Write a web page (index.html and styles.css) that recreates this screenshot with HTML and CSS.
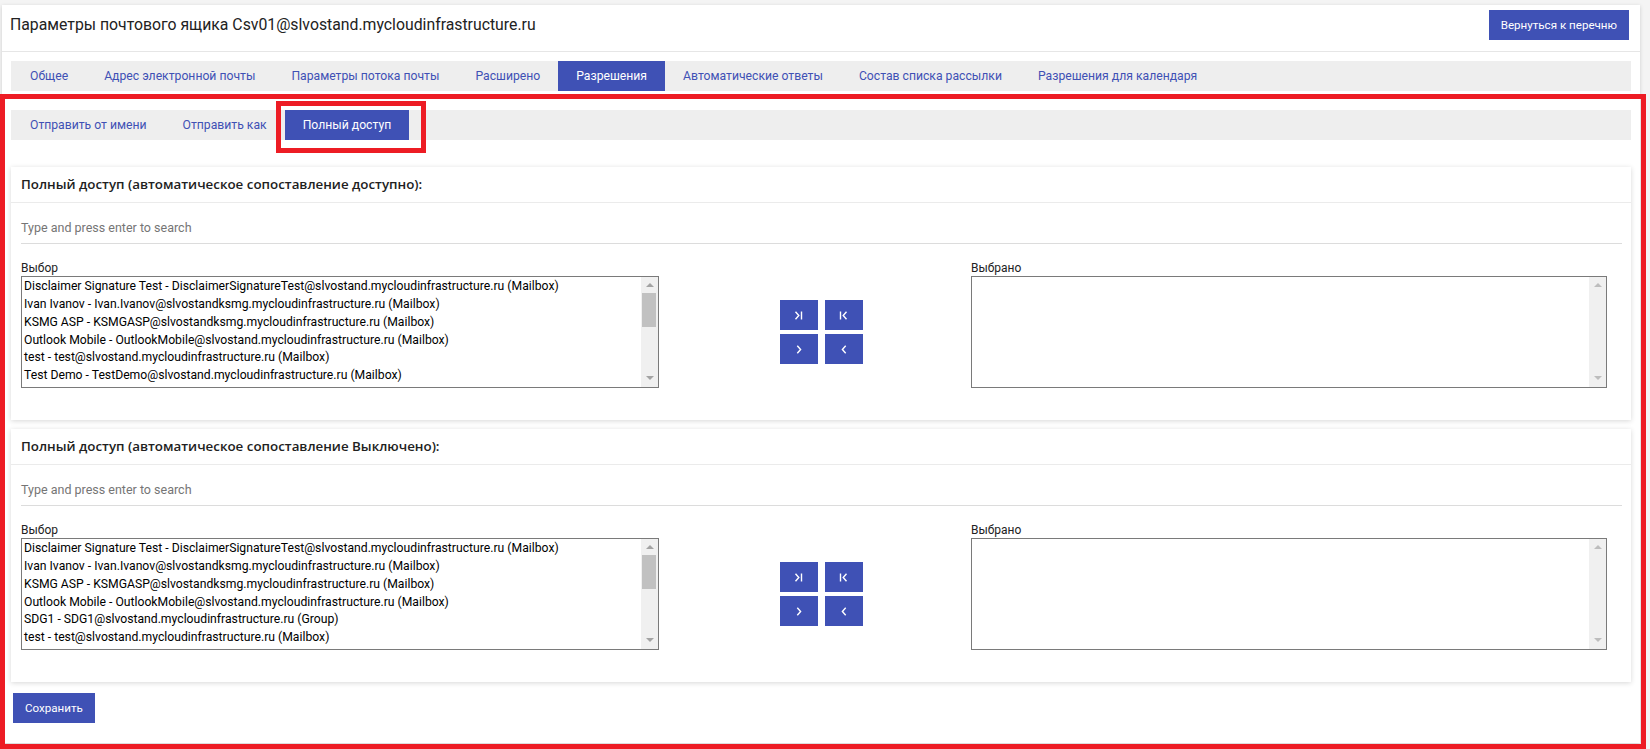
FILE: index.html
```html
<!DOCTYPE html>
<html lang="ru">
<head>
<meta charset="utf-8">
<title>Параметры почтового ящика</title>
<link rel="stylesheet" href="styles.css">
</head>
<body>
<div class="page">
  <div class="card">
    <header class="card-head">
      <h1 class="title">Параметры почтового ящика Csv01@slvostand.mycloudinfrastructure.ru</h1>
      <button class="btn">Вернуться к перечню</button>
    </header>
    <div class="card-body">
      <nav class="tabs">
        <a class="tab">Общее</a>
        <a class="tab">Адрес электронной почты</a>
        <a class="tab">Параметры потока почты</a>
        <a class="tab">Расширено</a>
        <a class="tab active">Разрешения</a>
        <a class="tab">Автоматические ответы</a>
        <a class="tab">Состав списка рассылки</a>
        <a class="tab">Разрешения для календаря</a>
      </nav>
      <nav class="tabs subtabs">
        <a class="tab">Отправить от имени</a>
        <a class="tab">Отправить как</a>
        <a class="tab active">Полный доступ</a>
      </nav>

      <section class="panel first">
        <div class="panel-head">Полный доступ (автоматическое сопоставление доступно):</div>
        <div class="panel-body">
          <div class="search">Type and press enter to search</div>
          <div class="picker">
            <div class="col">
              <div class="label">Выбор</div>
              <div class="listbox">
                <div class="items">
                  <div>Disclaimer Signature Test - DisclaimerSignatureTest@slvostand.mycloudinfrastructure.ru (Mailbox)</div>
                  <div>Ivan Ivanov - Ivan.Ivanov@slvostandksmg.mycloudinfrastructure.ru (Mailbox)</div>
                  <div>KSMG ASP - KSMGASP@slvostandksmg.mycloudinfrastructure.ru (Mailbox)</div>
                  <div>Outlook Mobile - OutlookMobile@slvostand.mycloudinfrastructure.ru (Mailbox)</div>
                  <div>test - test@slvostand.mycloudinfrastructure.ru (Mailbox)</div>
                  <div>Test Demo - TestDemo@slvostand.mycloudinfrastructure.ru (Mailbox)</div>
                </div>
                <div class="sbar"><span class="arr up"></span><span class="thumb"></span><span class="arr down"></span></div>
              </div>
            </div>
            <div class="mid">
              <div class="movers">
                <button class="mv"><svg width="9" height="9" viewBox="0 0 9 9"><path d="M1.5 0.8 L4.8 4.5 L1.5 8.2" /><path d="M7.5 0.5 V8.5" /></svg></button>
                <button class="mv"><svg width="9" height="9" viewBox="0 0 9 9"><path d="M7.5 0.8 L4.2 4.5 L7.5 8.2" /><path d="M1.5 0.5 V8.5" /></svg></button>
                <button class="mv"><svg width="6" height="9" viewBox="0 0 6 9"><path d="M1.3 0.8 L4.6 4.5 L1.3 8.2" /></svg></button>
                <button class="mv"><svg width="6" height="9" viewBox="0 0 6 9"><path d="M4.7 0.8 L1.4 4.5 L4.7 8.2" /></svg></button>
              </div>
            </div>
            <div class="col">
              <div class="label">Выбрано</div>
              <div class="listbox">
                <div class="items"></div>
                <div class="sbar off"><span class="arr up"></span><span class="arr down"></span></div>
              </div>
            </div>
          </div>
        </div>
      </section>

      <section class="panel">
        <div class="panel-head">Полный доступ (автоматическое сопоставление Выключено):</div>
        <div class="panel-body">
          <div class="search">Type and press enter to search</div>
          <div class="picker">
            <div class="col">
              <div class="label">Выбор</div>
              <div class="listbox">
                <div class="items">
                  <div>Disclaimer Signature Test - DisclaimerSignatureTest@slvostand.mycloudinfrastructure.ru (Mailbox)</div>
                  <div>Ivan Ivanov - Ivan.Ivanov@slvostandksmg.mycloudinfrastructure.ru (Mailbox)</div>
                  <div>KSMG ASP - KSMGASP@slvostandksmg.mycloudinfrastructure.ru (Mailbox)</div>
                  <div>Outlook Mobile - OutlookMobile@slvostand.mycloudinfrastructure.ru (Mailbox)</div>
                  <div>SDG1 - SDG1@slvostand.mycloudinfrastructure.ru (Group)</div>
                  <div>test - test@slvostand.mycloudinfrastructure.ru (Mailbox)</div>
                </div>
                <div class="sbar"><span class="arr up"></span><span class="thumb"></span><span class="arr down"></span></div>
              </div>
            </div>
            <div class="mid">
              <div class="movers">
                <button class="mv"><svg width="9" height="9" viewBox="0 0 9 9"><path d="M1.5 0.8 L4.8 4.5 L1.5 8.2" /><path d="M7.5 0.5 V8.5" /></svg></button>
                <button class="mv"><svg width="9" height="9" viewBox="0 0 9 9"><path d="M7.5 0.8 L4.2 4.5 L7.5 8.2" /><path d="M1.5 0.5 V8.5" /></svg></button>
                <button class="mv"><svg width="6" height="9" viewBox="0 0 6 9"><path d="M1.3 0.8 L4.6 4.5 L1.3 8.2" /></svg></button>
                <button class="mv"><svg width="6" height="9" viewBox="0 0 6 9"><path d="M4.7 0.8 L1.4 4.5 L4.7 8.2" /></svg></button>
              </div>
            </div>
            <div class="col">
              <div class="label">Выбрано</div>
              <div class="listbox">
                <div class="items"></div>
                <div class="sbar off"><span class="arr up"></span><span class="arr down"></span></div>
              </div>
            </div>
          </div>
        </div>
      </section>

      <button class="btn save">Сохранить</button>
    </div>
  </div>
  <div class="annot annot-main"></div>
  <div class="annot annot-tab"></div>
</div>
</body>
</html>
```

FILE: styles.css
```css
html, body {
  margin: 0;
  height: 100%;
}
body {
  background: #f4f4f4;
  font-family: Roboto, "Segoe UI", "Open Sans", sans-serif;
  color: #212121;
  overflow: hidden;
}
.page {
  position: relative;
  height: 749px;
  box-sizing: border-box;
  padding: 5px 10px 0 2px;
}
.card {
  width: 1638px;
  background: #fff;
  box-shadow: 0 1px 4px rgba(0, 0, 0, 0.16);
}
.card-head {
  height: 46px;
  box-sizing: content-box;
  border-bottom: 1px solid #e6e6e6;
  padding: 0 11px 0 8px;
  display: flex;
  align-items: flex-start;
  justify-content: space-between;
}
.title {
  margin: 0;
  padding-top: 5px;
  font-size: 15.8px;
  font-weight: 400;
  line-height: 30px;
  color: #222;
}
.btn {
  margin-top: 5px;
  height: 30px;
  padding: 0 12px;
  border: 0;
  background: #3f51b5;
  color: #fff;
  font-family: inherit;
  font-size: 11.6px;
  cursor: pointer;
}
.card-body {
  padding: 9px 9px 20px 9px;
}
.tabs {
  display: flex;
  height: 30px;
  background: #eeeeee;
}
.tab {
  padding: 0 18px;
  line-height: 30px;
  font-size: 12.2px;
  color: #3f51b5;
  white-space: nowrap;
}
.tab:first-child {
  padding-left: 19px;
}
.tab.active {
  background: #3f51b5;
  color: #fff;
}
.subtabs {
  margin-top: 19px;
}
.panel {
  background: #fff;
  box-shadow: 0 1px 5px rgba(0, 0, 0, 0.16);
  margin-top: 9px;
}
.panel.first {
  margin-top: 27px;
}
.panel-head {
  height: 35px;
  line-height: 35px;
  padding: 0 10px;
  border-bottom: 1px solid #ebebeb;
  font-family: "Open Sans", Roboto, sans-serif;
  font-size: 13.35px;
  font-weight: 600;
  color: #212121;
}
.panel-body {
  padding: 10px 9px 32px 10px;
}
.search {
  height: 30px;
  line-height: 30px;
  border-bottom: 1px solid #dcdcdc;
  font-size: 12.5px;
  color: #757575;
}
.picker {
  margin-top: 16px;
  display: grid;
  grid-template-columns: 638px 312px 636px;
}
.label {
  height: 16px;
  line-height: 16px;
  font-size: 12px;
  color: #222;
}
.listbox {
  height: 112px;
  box-sizing: border-box;
  border: 1px solid #7a7a7a;
  display: flex;
  background: #fff;
}
.items {
  flex: 1;
  overflow: hidden;
  padding: 1px 2px 0 2px;
  font-size: 12.2px;
  line-height: 17.85px;
  color: #000;
  white-space: nowrap;
}
.sbar {
  width: 17px;
  background: #f0f0f0;
  position: relative;
}
.arr {
  position: absolute;
  left: 5px;
  width: 0;
  height: 0;
  border-left: 4px solid transparent;
  border-right: 4px solid transparent;
}
.arr.up {
  top: 6px;
  border-bottom: 4px solid #a3a3a3;
}
.arr.down {
  bottom: 7px;
  border-top: 4px solid #a3a3a3;
}
.sbar.off .arr.up {
  border-bottom-color: #bdbdbd;
}
.sbar.off .arr.down {
  border-top-color: #bdbdbd;
}
.thumb {
  position: absolute;
  left: 1px;
  right: 2px;
  top: 16px;
  height: 34px;
  background: #c1c1c1;
}
.mid {
  padding: 16px 0 0 12px;
  display: flex;
  justify-content: center;
  align-items: center;
}
.movers {
  height: 112px;
  display: grid;
  grid-template-columns: 38px 38px;
  grid-auto-rows: 30px;
  gap: 4px 7px;
  align-content: center;
}
.mv {
  width: 38px;
  height: 30px;
  border: 0;
  padding: 0;
  background: #3f51b5;
  display: flex;
  align-items: center;
  justify-content: center;
}
.mv svg path {
  fill: none;
  stroke: #fff;
  stroke-width: 1.4;
}
.save {
  margin: 11px 0 0 2px;
  display: block;
}
.annot {
  position: absolute;
  box-sizing: border-box;
  border: 5px solid #ed1c24;
  pointer-events: none;
}
.annot-main {
  left: 0;
  top: 94px;
  width: 1646px;
  height: 655px;
}
.annot-tab {
  left: 276px;
  top: 101px;
  width: 150px;
  height: 52px;
}
```
